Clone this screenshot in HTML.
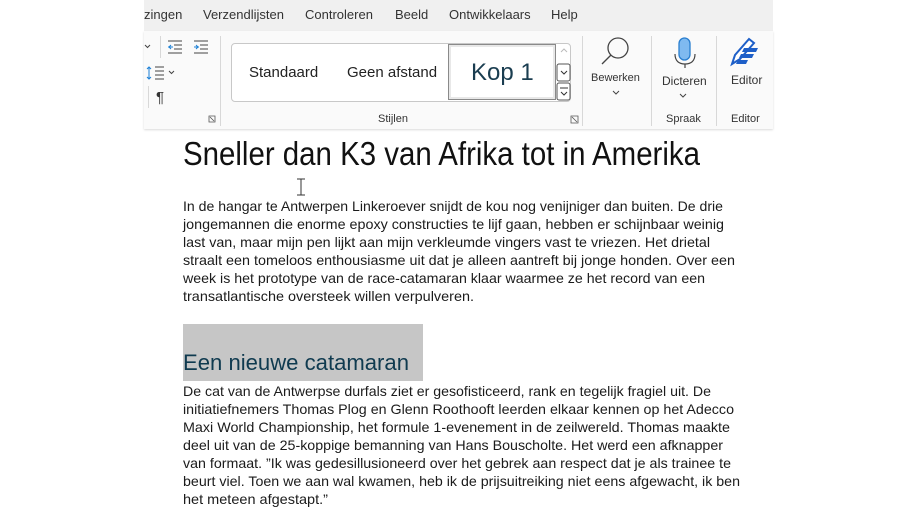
<!DOCTYPE html>
<html><head><meta charset="utf-8"><style>
body{margin:0;width:916px;height:515px;background:#fff;overflow:hidden;position:relative;font-family:"Liberation Sans",sans-serif}
.a{position:absolute;white-space:nowrap}
.menu{position:absolute;left:144px;top:0;width:629px;height:31px;background:#f0f0f0}
.rib{position:absolute;left:144px;top:31px;width:629px;height:98px;background:#fafafa;box-shadow:0 1px 2px rgba(0,0,0,.15)}
.m{top:7px;font-size:13px;color:#333}
.sep{position:absolute;width:1px;background:#d8d8d8}
.s{font-size:11px;color:#333}
</style></head><body>
<div class="menu"></div>
<div class="rib"></div>
<div class="a m" style="left:144px">zingen</div>
<div class="a m" style="left:203px">Verzendlijsten</div>
<div class="a m" style="left:305px">Controleren</div>
<div class="a m" style="left:395px">Beeld</div>
<div class="a m" style="left:449px">Ontwikkelaars</div>
<div class="a m" style="left:551px">Help</div>

<div class="sep" style="left:160px;top:36px;height:22px"></div>
<div class="sep" style="left:148px;top:86px;height:22px"></div>
<div class="sep" style="left:220px;top:36px;height:90px"></div>
<div class="sep" style="left:582px;top:36px;height:90px"></div>
<div class="sep" style="left:651px;top:36px;height:90px"></div>
<div class="sep" style="left:716px;top:36px;height:90px"></div>

<svg class="a" style="left:140px;top:30px" width="80" height="100">
<path d="M5 15l2.5 2.5 2.5-2.5" stroke="#444" fill="none"/>
<path d="M28 11h14M34 15h8M34 19h8M28 23h14" stroke="#444"/><path d="M28 17h5M29 17l2-2M29 17l2 2" stroke="#1a7fd6"/>
<path d="M54 11h14M60 15h8M60 19h8M54 23h14" stroke="#444"/><path d="M54 17h5M58 17l-2-2M58 17l-2 2" stroke="#1a7fd6"/>
<path d="M9 37v12M7 39l2-2 2 2M7 47l2 2 2-2" stroke="#1a7fd6" fill="none"/>
<path d="M15 37h9M15 41h9M15 45h9M15 49h9" stroke="#444"/>
<path d="M29 41l2.5 2.5 2.5-2.5" stroke="#444" fill="none"/>
<text x="16" y="72" font-size="15" fill="#333" font-family="Liberation Sans">¶</text>
<path d="M69 86h6v6h-6zM70 87l4 4" stroke="#555" fill="none" stroke-width=".8"/>
</svg>

<div class="a" style="left:231px;top:43px;width:338px;height:57px;border:1px solid #c8c8c8;border-radius:4px;background:#fff"></div>
<div class="a" style="left:249px;top:64px;font-size:15px;color:#222">Standaard</div>
<div class="a" style="left:347px;top:64px;font-size:15px;color:#222">Geen afstand</div>
<div class="a" style="left:448px;top:44px;width:106px;height:54px;border:1px solid #8a8a8a;box-shadow:inset 0 0 0 2px #e8e8e8;background:#fff"></div>
<div class="a" style="left:471px;top:59px;font-size:24px;color:#1a3d50">Kop 1</div>
<svg class="a" style="left:556px;top:43px" width="16" height="60">
<path d="M5 9l3-3 3 3" stroke="#bbb" fill="none"/>
<rect x="1" y="21" width="13" height="17" rx="2" fill="#fff" stroke="#555"/><path d="M5 28l3 3 3-3" stroke="#333" fill="none"/>
<rect x="1" y="40" width="13" height="17" rx="2" fill="#fff" stroke="#555"/><path d="M4 45h8M5 49l3 3 3-3" stroke="#333" fill="none"/>
</svg>
<div class="a s" style="left:378px;top:113px">Stijlen</div>
<svg class="a" style="left:570px;top:115px" width="10" height="10"><path d="M1 1h7v7h-7zM2 2l5 5" stroke="#555" fill="none" stroke-width=".8"/></svg>

<svg class="a" style="left:600px;top:36px" width="36" height="30"><circle cx="18" cy="12" r="10" fill="none" stroke="#444" stroke-width="1.3"/><path d="M11 19l-9 9" stroke="#444" stroke-width="1.3"/></svg>
<div class="a s" style="left:591px;top:72px">Bewerken</div>
<svg class="a" style="left:612px;top:90px" width="8" height="6"><path d="M1 1l3 3 3-3" stroke="#444" fill="none"/></svg>

<svg class="a" style="left:670px;top:36px" width="30" height="32"><rect x="9" y="2" width="11" height="22" rx="5.5" fill="#7fbaf0" stroke="#2a7fd0" stroke-width="1.3"/><path d="M5 18c0 7 4 10 10 10s10-3 10-10M15 28v4" stroke="#444" fill="none" stroke-width="1.2"/></svg>
<div class="a" style="left:662px;top:74px;font-size:12px;color:#333">Dicteren</div>
<svg class="a" style="left:679px;top:93px" width="8" height="6"><path d="M1 1l3 3 3-3" stroke="#444" fill="none"/></svg>
<div class="a s" style="left:666px;top:113px">Spraak</div>

<svg class="a" style="left:728px;top:36px" width="36" height="32"><path d="M4 28l3-9 14-16 5 4-14 16z" fill="#fff" stroke="#1e5fc8" stroke-width="2"/><path d="M16 12h14l-2 4h-14zM13 18h13l-2 4h-13zM10 24h10l-2 4h-10z" fill="#1e5fc8"/></svg>
<div class="a" style="left:731px;top:73px;font-size:12px;color:#333">Editor</div>
<div class="a s" style="left:731px;top:113px">Editor</div>

<div class="a" style="left:183px;top:324px;width:240px;height:57px;background:#c6c6c6"></div>
<svg class="a" style="left:296px;top:178px" width="10" height="18"><path d="M1 1h8M5 1v16M1 17h8" stroke="#333" fill="none"/></svg>

<svg class="a" style="left:0;top:0" width="916" height="515" font-family="Liberation Sans" fill="#1b1b1b">
<text x="183" y="165" font-size="33" textLength="517" lengthAdjust="spacingAndGlyphs" fill="#111">Sneller dan K3 van Afrika tot in Amerika</text>
<g font-size="14">
<text x="183" y="211" textLength="540" lengthAdjust="spacingAndGlyphs">In de hangar te Antwerpen Linkeroever snijdt de kou nog venijniger dan buiten. De drie</text>
<text x="183" y="229" textLength="541" lengthAdjust="spacingAndGlyphs">jongemannen die enorme epoxy constructies te lijf gaan, hebben er schijnbaar weinig</text>
<text x="183" y="247" textLength="527" lengthAdjust="spacingAndGlyphs">last van, maar mijn pen lijkt aan mijn verkleumde vingers vast te vriezen. Het drietal</text>
<text x="183" y="265" textLength="552" lengthAdjust="spacingAndGlyphs">straalt een tomeloos enthousiasme uit dat je alleen aantreft bij jonge honden. Over een</text>
<text x="183" y="283" textLength="522" lengthAdjust="spacingAndGlyphs">week is het prototype van de race-catamaran klaar waarmee ze het record van een</text>
<text x="183" y="301" textLength="291" lengthAdjust="spacingAndGlyphs">transatlantische oversteek willen verpulveren.</text>
</g>
<text x="183" y="370" font-size="22" textLength="226" lengthAdjust="spacingAndGlyphs" fill="#0f3a4f">Een nieuwe catamaran</text>
<g font-size="14">
<text x="183" y="396" textLength="528" lengthAdjust="spacingAndGlyphs">De cat van de Antwerpse durfals ziet er gesofisticeerd, rank en tegelijk fragiel uit. De</text>
<text x="183" y="414" textLength="551" lengthAdjust="spacingAndGlyphs">initiatiefnemers Thomas Plog en Glenn Roothooft leerden elkaar kennen op het Adecco</text>
<text x="183" y="432" textLength="547" lengthAdjust="spacingAndGlyphs">Maxi World Championship, het formule 1-evenement in de zeilwereld. Thomas maakte</text>
<text x="183" y="450" textLength="540" lengthAdjust="spacingAndGlyphs">deel uit van de 25-koppige bemanning van Hans Bouscholte. Het werd een afknapper</text>
<text x="183" y="468" textLength="548" lengthAdjust="spacingAndGlyphs">van formaat. ”Ik was gedesillusioneerd over het gebrek aan respect dat je als trainee te</text>
<text x="183" y="486" textLength="557" lengthAdjust="spacingAndGlyphs">beurt viel. Toen we aan wal kwamen, heb ik de prijsuitreiking niet eens afgewacht, ik ben</text>
<text x="183" y="504" textLength="145" lengthAdjust="spacingAndGlyphs">het meteen afgestapt.”</text>
</g>
</svg>
</body></html>
